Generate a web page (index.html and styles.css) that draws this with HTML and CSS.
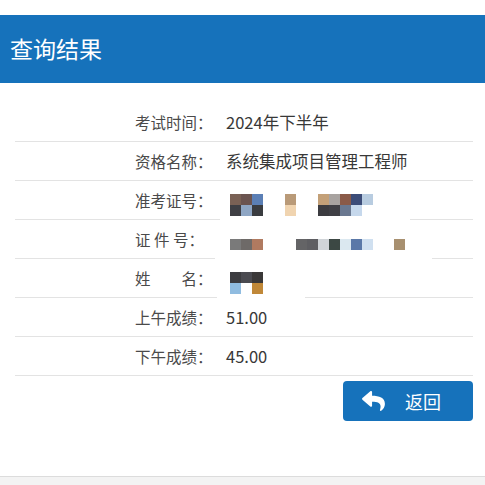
FILE: index.html
```html
<!DOCTYPE html>
<html lang="zh-CN">
<head>
<meta charset="utf-8">
<title>查询结果</title>
<link rel="stylesheet" href="styles.css">
</head>
<body>
<div class="page">
  <div class="header">查询结果</div>
  <div class="result">
    <div class="row"><span class="label">考试时间：</span><span class="value">2024年下半年</span></div>
    <div class="row"><span class="label">资格名称：</span><span class="value">系统集成项目管理工程师</span></div>
    <div class="row">
      <span class="label">准考证号：</span>
      <span class="value mosaic-line">
        <span class="mosaic m3">
          <i style="background:#7a6155"></i><i style="background:#6b5450"></i><i style="background:#5b7fb5"></i>
          <i style="background:#3f3f44"></i><i style="background:#8fa6c4"></i><i style="background:#3a3c40"></i>
        </span>
        <span class="mosaic m1 gap1">
          <i style="background:#b99a78"></i>
          <i style="background:#f0d4b0"></i>
        </span>
        <span class="mosaic m5 gap2">
          <i style="background:#c3a078"></i><i style="background:#a8a3a0"></i><i style="background:#8a5a48"></i><i style="background:#3c4c78"></i><i style="background:#b8cce0"></i>
          <i style="background:#3c3c40"></i><i style="background:#404045"></i><i style="background:#6a7890"></i><i style="background:#c6d8ec"></i><i style="background:#ffffff"></i>
        </span>
      </span>
      <span class="mask mask-a"></span>
    </div>
    <div class="row">
      <span class="label">证 件 号：</span>
      <span class="value mosaic-line">
        <span class="mosaic m3">
          <i style="background:#7a7a7a"></i><i style="background:#6e6a68"></i><i style="background:#b07a60"></i>
        </span>
        <span class="mosaic m7 gap3">
          <i style="background:#646466"></i><i style="background:#5e5e62"></i><i style="background:#d0d4d8"></i><i style="background:#3c4844"></i><i style="background:#dbe8f0"></i><i style="background:#5a78a8"></i><i style="background:#d0e0f0"></i>
        </span>
        <span class="mosaic m1 gap4">
          <i style="background:#a89070"></i>
        </span>
      </span>
      <span class="mask mask-b"></span>
    </div>
    <div class="row">
      <span class="label">姓　　名：</span>
      <span class="value mosaic-line">
        <span class="mosaic m3">
          <i style="background:#3c3c40"></i><i style="background:#4a4a50"></i><i style="background:#3a3838"></i>
          <i style="background:#90bce0"></i><i style="background:#ffffff"></i><i style="background:#c08838"></i>
        </span>
      </span>
      <span class="mask mask-c"></span>
    </div>
    <div class="row"><span class="label">上午成绩：</span><span class="value">51.00</span></div>
    <div class="row"><span class="label">下午成绩：</span><span class="value">45.00</span></div>
    <div class="actions">
      <button class="back-btn" type="button">
        <svg class="back-icon" viewBox="0 0 512 448" aria-hidden="true">
          <path fill="#ffffff" d="M8.309 157.836L184.313 5.851C199.719-7.454 224 3.347 224 24.015v80.053c160.629 1.839 288 34.032 288 186.258 0 61.441-39.581 122.309-83.333 154.132-13.653 9.931-33.111-2.533-28.077-18.631 45.344-145.012-21.507-183.51-176.59-185.742V328c0 20.7-24.3 31.453-39.687 18.164l-176.004-152c-11.071-9.562-11.086-26.753 0-36.328z"/>
        </svg>
        <span class="back-text">返回</span>
      </button>
    </div>
  </div>
  <div class="footer"></div>
</div>
</body>
</html>
```

FILE: styles.css
```css
html, body {
  margin: 0;
  padding: 0;
  background: #ffffff;
}

body {
  font-family: "Noto Sans CJK SC", "Noto Sans", sans-serif;
  color: #333333;
  height: 485px;
  overflow: hidden;
}

.page {
  padding-top: 15px;
}

.header {
  height: 68px;
  background: #1672bb;
  color: #ffffff;
  font-size: 23px;
  display: flex;
  align-items: center;
  padding-left: 10px;
  padding-bottom: 2px;
  box-sizing: border-box;
}

.result {
  margin: 20px 12px 0 15px;
}

.row {
  position: relative;
  height: 38px;
  border-bottom: 1px solid #e3e3e3;
  display: flex;
  align-items: center;
}

.label {
  box-sizing: content-box;
  padding-left: 120px;
  width: 91px;
  font-size: 15.5px;
  color: #4a4a4a;
  white-space: pre;
  flex: none;
}

.value {
  font-size: 16.5px;
  color: #383838;
}

.mosaic-line {
  display: flex;
  align-items: center;
  padding-left: 4px;
  padding-top: 10px;
}

.mosaic {
  display: grid;
  grid-auto-rows: 11px;
  filter: blur(0.4px);
}

.mosaic i {
  display: block;
  width: 11px;
  height: 11px;
}

.m1 { grid-template-columns: repeat(1, 11px); }
.m3 { grid-template-columns: repeat(3, 11px); }
.m5 { grid-template-columns: repeat(5, 11px); }
.m7 { grid-template-columns: repeat(7, 11px); }

.gap1 { margin-left: 22px; }
.gap2 { margin-left: 22px; }
.gap3 { margin-left: 33px; }
.gap4 { margin-left: 21px; }

.mask {
  position: absolute;
  bottom: -1px;
  height: 2px;
  background: #ffffff;
}

.mask-a { left: 205px; width: 190px; }
.mask-b { left: 200px; width: 217px; }
.mask-c { left: 202px; width: 88px; }

.actions {
  display: flex;
  justify-content: flex-end;
  padding-top: 5px;
}

.back-btn {
  width: 130px;
  height: 40px;
  border: none;
  border-radius: 4px;
  background: #1672bb;
  color: #ffffff;
  display: flex;
  align-items: center;
  padding: 0 0 0 19px;
  font-family: "Noto Sans CJK SC", "Noto Sans", sans-serif;
  cursor: pointer;
}

.back-icon {
  width: 23px;
  height: 20px;
  flex: none;
}

.back-text {
  margin-left: 20px;
  font-size: 18px;
  line-height: 1;
}

.footer {
  margin-top: 55px;
  height: 20px;
  border-top: 1px solid #dcdcdc;
  background: #f3f3f3;
}
```
